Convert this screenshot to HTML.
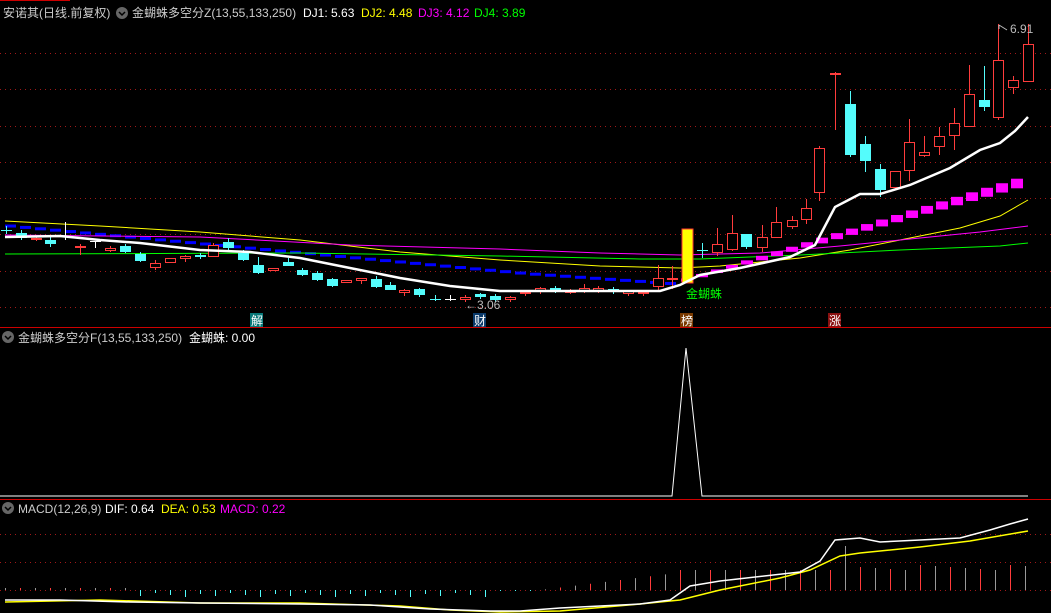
<!DOCTYPE html><html><head><meta charset="utf-8"><style>
body{margin:0;background:#000;width:1051px;height:613px;overflow:hidden;font-family:"Liberation Sans","Noto Sans CJK SC",sans-serif}
svg{position:absolute;left:0;top:0}
.t{font-size:12px}
</style></head><body>
<svg id="s" width="1051" height="613" xmlns="http://www.w3.org/2000/svg">
<line x1="0" y1="0.5" x2="70" y2="0.5" stroke="#c00"/>
<line x1="0" y1="327.5" x2="1051" y2="327.5" stroke="#c00"/>
<line x1="0" y1="499.5" x2="1051" y2="499.5" stroke="#c00"/>
<g id="g"></g>
<text x="3" y="17" class="t" fill="#ccc">安诺其(日线.前复权)</text>
<circle cx="122" cy="13" r="6" fill="#666"/><path d="M119 12l3 3 3-3" stroke="#000" fill="none" stroke-width="1.5"/>
<text x="132" y="17" class="t" fill="#ccc">金蝴蛛多空分Z(13,55,133,250)</text>
<text x="303" y="17" class="t" fill="#fff">DJ1: 5.63</text>
<text x="361" y="17" class="t" fill="#ff0">DJ2: 4.48</text>
<text x="418" y="17" class="t" fill="#f0f">DJ3: 4.12</text>
<text x="474" y="17" class="t" fill="#0f0">DJ4: 3.89</text>
<circle cx="8" cy="337" r="6" fill="#666"/><path d="M5 336l3 3 3-3" stroke="#000" fill="none" stroke-width="1.5"/>
<text x="18" y="342" class="t" fill="#ccc">金蝴蛛多空分F(13,55,133,250)</text>
<text x="189" y="342" class="t" fill="#fff">金蝴蛛: 0.00</text>
<circle cx="8" cy="508" r="6" fill="#666"/><path d="M5 507l3 3 3-3" stroke="#000" fill="none" stroke-width="1.5"/>
<text x="18" y="513" class="t" fill="#ccc">MACD(12,26,9)</text>
<text x="105" y="513" class="t" fill="#fff">DIF: 0.64</text>
<text x="161" y="513" class="t" fill="#ff0">DEA: 0.53</text>
<text x="220" y="513" class="t" fill="#f0f">MACD: 0.22</text>
<rect x="250" y="313" width="13" height="14" fill="#087878"/><text x="251" y="325" class="t" fill="#fff">解</text>
<rect x="473" y="313" width="13" height="14" fill="#0a3a6a"/><text x="474" y="325" class="t" fill="#fff">财</text>
<rect x="680" y="313" width="13" height="14" fill="#7a3a00"/><text x="681" y="325" class="t" fill="#fff">榜</text>
<rect x="828" y="313" width="13" height="14" fill="#8a1010"/><text x="829" y="325" class="t" fill="#fff">涨</text>
<text x="686" y="298" class="t" fill="#0f0">金蝴蛛</text>
<text x="1010" y="33" class="t" fill="#bbb">6.91</text><path d="M999 25l8 5M999 25v4" stroke="#bbb" fill="none"/>
<text x="465" y="309" class="t" fill="#bbb">←3.06</text>
</svg>
<script>
var g=document.getElementById('g'),h='';
function L(p,c,w){h+='<polyline points="'+p.map(a=>a.join(',')).join(' ')+'" fill="none" stroke="'+c+'" stroke-width="'+(w||1)+'"/>';}
function R(x,y,w,hh,f,s){h+='<rect x="'+x+'" y="'+y+'" width="'+w+'" height="'+hh+'" fill="'+f+'"'+(s?' stroke="'+s+'"':'')+'/>';}
[53,89,126,162,198,234,271,307,534,562,590].forEach(y=>h+='<line x1="0" x2="1051" y1="'+(y+.5)+'" y2="'+(y+.5)+'" stroke="#a01818" stroke-dasharray="1,4"/>');
// blue dashes
for(var x=5;x<680;x+=15){var y=x<520?225+(x-10)*47/510:272+(x-520)*11/160;R(x,y,11,3,'#00f');}
// lines
L([[5,221],[100,226],[200,232],[300,240],[400,252],[500,260],[600,266],[680,268],[720,266],[800,258],[850,250],[900,240],[960,228],[1000,216],[1028,200]],'#ff0');
L([[5,235],[200,237],[350,245],[500,249],[600,253],[680,255],[760,253],[840,246],[920,238],[980,232],[1028,226]],'#f0f');
L([[5,254],[300,253],[500,256],[640,259],[700,259],[800,255],[900,250],[1000,246],[1028,243]],'#0f0');
// magenta blocks
for(var x=686,i=0;x<1030;x+=15,i++){var y=280-(x-686)*100/342,hh=3+i*0.3;R(x-5,y-hh/2,12,hh,'#f0f');}
var C=[[6,230,230,226,234,'c'],[21,233,238,230,240,'c'],[36,238,240,236,241,'r'],[50,240,244,235,247,'c'],[65,236,236,222,240,'w'],[80,246,248,244,255,'r'],[95,241,241,241,248,'w'],[110,248,251,246,252,'r'],[125,246,252,244,253,'c'],[140,254,261,252,262,'c'],[155,263,268,260,270,'r'],[170,258,263,258,263,'r'],[185,256,259,255,262,'r'],[200,255,257,253,259,'c'],[213,245,257,243,257,'r'],[228,242,248,238,250,'c'],[243,253,260,250,261,'c'],[258,265,273,257,274,'c'],[273,268,271,268,271,'r'],[288,262,266,258,266,'c'],[302,270,275,268,276,'c'],[317,273,280,271,281,'c'],[332,279,286,278,287,'c'],[346,280,283,280,283,'r'],[361,278,281,278,284,'r'],[376,279,287,276,288,'c'],[390,285,290,282,290,'c'],[404,290,293,289,296,'r'],[419,289,295,288,297,'c'],[435,299,299,295,301,'c'],[450,299,299,295,301,'w'],[465,297,300,295,302,'r'],[480,294,297,293,299,'c'],[495,296,300,294,302,'c'],[510,297,300,296,302,'r'],[525,292,294,290,296,'r'],[540,288,292,287,294,'r'],[555,288,291,286,293,'c'],[570,291,293,289,294,'r'],[584,288,291,284,293,'r'],[598,288,291,286,293,'r'],[613,289,292,287,294,'c'],[628,291,294,290,296,'r'],[643,292,294,290,296,'r'],[658,278,287,265,290,'r'],[672,278,279,266,289,'r'],[702,250,250,243,258,'c'],[717,244,253,228,256,'r'],[732,233,250,215,251,'r'],[746,234,247,234,249,'c'],[762,237,248,225,252,'r'],[776,222,238,207,238,'r'],[792,220,227,216,229,'r'],[806,208,220,199,224,'r'],[819,148,193,146,201,'r'],[835,73,75,72,130,'r'],[850,104,155,91,157,'c'],[865,144,161,136,172,'c'],[880,169,190,164,197,'c'],[895,171,188,171,188,'r'],[909,142,171,119,181,'r'],[924,152,156,136,157,'r'],[939,136,147,127,155,'r'],[954,123,136,108,150,'r'],[969,94,127,65,127,'r'],[984,100,107,66,111,'c'],[998,60,118,24,120,'r'],[1013,80,88,76,94,'r'],[1028,44,82,24,82,'r']];
C.forEach(c=>{var col=c[5]=='c'?'#54fcfc':c[5]=='r'?'#ff3c3c':'#fff';h+='<line x1="'+(c[0]+.5)+'" x2="'+(c[0]+.5)+'" y1="'+c[3]+'" y2="'+c[4]+'" stroke="'+col+'"/>';
 var hh=Math.max(1,c[2]-c[1]);if(c[5]=='r')R(c[0]-4.5,c[1]+.5,10,hh-1||1,'#000',col);else R(c[0]-5,c[1],11,hh,col);});
R(682,229,11,54,'#ff0','#f33');
L([[5,237],[60,236],[100,240],[140,243],[200,250],[250,252],[300,258],[350,268],[400,278],[450,286],[500,291],[550,291],[600,291],[660,291],[680,285],[700,275],[740,268],[790,257],[815,245],[835,207],[860,194],[880,194],[910,185],[950,168],[980,150],[1000,143],[1015,131],[1028,117]],'#fff',2.5);
// panel2
L([[0,496],[672,496],[686,348],[702,496],[1028,496]],'#fff');
// macd bars
for(var x=5,i=0;x<1030;x+=15,i++){var v;
 if(x<130)v=-2;else if(x<500)v=3+((i*7)%5);else if(x<540)v=1;else if(x<680)v=-(x-540)/8;else if(x<840)v=-20;else if(x<860)v=-44;else v=-20-((i*5)%6);
 var col=v<0?(i%2?'#ff3c3c':'#999'):'#54fcfc';h+='<line x1="'+(x+.5)+'" x2="'+(x+.5)+'" y1="590" y2="'+(590+v)+'" stroke="'+col+'"/>';}
L([[5,602],[100,600],[200,603],[300,603],[400,606],[450,610],[500,612],[560,611],[640,604],[680,600],[720,590],[780,578],[810,570],[840,556],[860,553],[920,547],[970,541],[1028,531]],'#ff0',1.5);
L([[5,600],[60,600],[130,602],[200,603],[300,604],[370,605],[430,609],[490,611],[520,611],[560,608],[600,606],[640,604],[670,600],[690,586],[720,581],[800,572],[820,561],[835,540],[860,538],[880,542],[920,540],[960,538],[990,530],[1010,524],[1028,519]],'#fff',1.5);
g.innerHTML=h;
</script>
</body></html>
